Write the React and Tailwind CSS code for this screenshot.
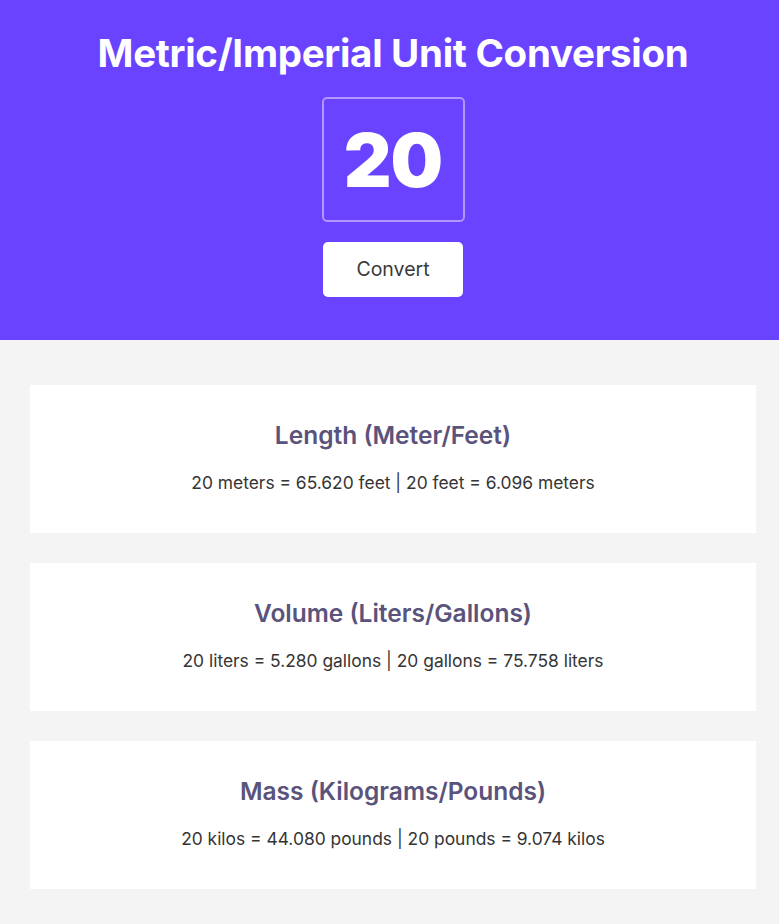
import React, { useState } from "react";

const conversions = (n) => [
    {
        title: "Length (Meter/Feet)",
        left: `${n} meters = ${(n * 3.281).toFixed(3)} feet`,
        right: `${n} feet = ${(n / 3.281).toFixed(3)} meters`,
    },
    {
        title: "Volume (Liters/Gallons)",
        left: `${n} liters = ${(n * 0.264).toFixed(3)} gallons`,
        right: `${n} gallons = ${(n / 0.264).toFixed(3)} liters`,
    },
    {
        title: "Mass (Kilograms/Pounds)",
        left: `${n} kilos = ${(n * 2.204).toFixed(3)} pounds`,
        right: `${n} pounds = ${(n / 2.204).toFixed(3)} kilos`,
    },
];

const App = () => {
    const [value, setValue] = useState("20");
    const [num, setNum] = useState(20);

    return (
        <div className="w-[786px] min-h-screen bg-[#f4f4f4] font-['Inter',sans-serif]">
            {/* Header */}
            <div className="bg-[#6943ff] h-[340px] flex flex-col items-center pt-[29px]">
                <h1 className="text-white text-[38.5px] font-bold leading-[48px] tracking-[-0.3px]">
                    Metric/Imperial Unit Conversion
                </h1>
                <input
                    value={value}
                    onChange={(e) => setValue(e.target.value)}
                    className="mt-[20px] w-[143px] h-[125px] rounded-[5px] border-2 border-[#b295ff] bg-transparent text-center text-white text-[74px] font-black tracking-[-1px] outline-none"
                />
                <button
                    onClick={() => setNum(Number(value) || 0)}
                    className="mt-[20px] w-[140px] h-[55px] rounded-[5px] bg-white text-[#3a3a3a] text-[19.5px] font-normal"
                >
                    Convert
                </button>
            </div>

            {/* Results */}
            <div className="flex flex-col gap-[30px] px-[30px] pt-[45px] pb-[34px]">
                {conversions(num).map((c) => (
                    <div key={c.title} className="bg-white h-[148px] flex flex-col items-center pt-[34px]">
                        <h2 className="text-[#5a537b] text-[24.5px] font-semibold leading-[32px]">{c.title}</h2>
                        <p className="mt-[19px] text-[#353535] text-[17.4px] leading-[26px]">
                            {c.left} | {c.right}
                        </p>
                    </div>
                ))}
            </div>
        </div>
    );
};

export default App;
